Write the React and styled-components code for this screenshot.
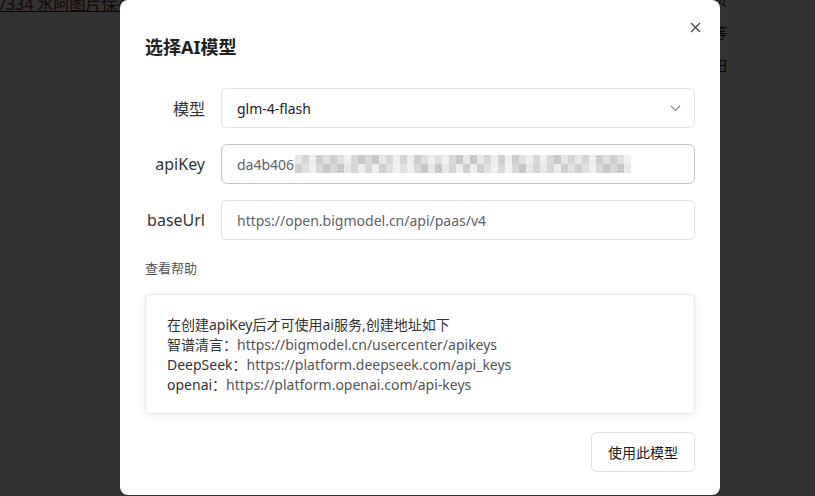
import React from 'react';
import styled, { createGlobalStyle } from 'styled-components';

const GlobalStyle = createGlobalStyle`
  html, body {
    margin: 0;
    padding: 0;
    background: #f2f2f2;
    font-family: "Noto Sans", "Noto Sans CJK SC", sans-serif;
    overflow: hidden;
  }
`;

const Page = styled.div`
  position: relative;
  width: 815px;
  height: 496px;
`;

const PageLink = styled.a`
  display: block;
  margin-top: -9px;
  font-size: 16px;
  color: #7a1010;
  text-decoration: underline;
  white-space: nowrap;
`;

const SideTable = styled.div`
  position: absolute;
  top: -8px;
  left: 640px;
  width: 92px;
  display: flex;
  flex-direction: column;
  background: #fff;
  border-right: 1px solid #fff;
`;

const SideCell = styled.div`
  height: 32px;
  border-bottom: 1px solid #f6f6f6;
  display: flex;
  align-items: center;
  justify-content: flex-end;
  padding-right: 5px;
  font-size: 14px;
  color: #222;
`;

const Overlay = styled.div`
  position: fixed;
  inset: 0;
  background: rgba(0, 0, 0, 0.8);
`;

const Modal = styled.div`
  position: fixed;
  top: 0;
  left: 120px;
  width: 600px;
  height: 495px;
  box-sizing: border-box;
  background: #fff;
  border-radius: 8px;
  padding: 36px 25px 24px;
  display: flex;
  flex-direction: column;
`;

const CloseBtn = styled.button`
  position: absolute;
  top: 20px;
  right: 18px;
  width: 14px;
  height: 14px;
  padding: 0;
  border: none;
  background: none;
  display: flex;
  align-items: center;
  justify-content: center;
`;

const Title = styled.h2`
  margin: 0 0 30px;
  font-size: 18px;
  line-height: 22px;
  font-weight: 700;
  color: #1f1f1f;
`;

const Form = styled.div`
  display: flex;
  flex-direction: column;
  gap: 16px;
`;

const Row = styled.div`
  display: flex;
  align-items: center;
  gap: 16px;
`;

const Label = styled.label`
  width: 60px;
  text-align: right;
  font-size: 16px;
  color: #333;
`;

const Field = styled.div`
  flex: 1;
  height: 40px;
  box-sizing: border-box;
  border: 1px solid ${(p) => p.$border};
  border-radius: 6px;
  padding: 0 15px;
  display: flex;
  align-items: center;
  font-size: 14px;
  color: ${(p) => p.$color || '#606266'};
`;

const Chevron = styled.svg`
  margin-left: auto;
  margin-right: -2px;
`;

const HelpLink = styled.div`
  margin-top: 19px;
  font-size: 13px;
  color: #555;
  line-height: 18px;
`;

const HelpBox = styled.div`
  margin-top: 17px;
  height: 120px;
  box-sizing: border-box;
  border: 1px solid #e6e6e6;
  border-radius: 5px;
  box-shadow: 0 2px 10px rgba(0, 0, 0, 0.07);
  padding: 20px 21px;
  font-size: 14px;
  line-height: 20px;
  color: #333;
`;

const Url = styled.span`
  color: #555;
`;

const Footer = styled.div`
  margin-top: 18px;
  display: flex;
  justify-content: flex-end;
`;

const Button = styled.button`
  width: 104px;
  height: 40px;
  border: 1px solid #e0e0e0;
  border-radius: 6px;
  background: #fff;
  font-family: "Noto Sans CJK SC", sans-serif;
  font-size: 14px;
  color: #1a1a1a;
`;

const shades = [
  '#e8e8e8', '#d6d6d6', '#eeeeee', '#cfcfcf', '#e1e1e1', '#f0f0f0', '#d9d9d9', '#c8c8c8',
];

const Mosaic = () => {
  const cols = 48;
  const rects = [];
  for (let r = 0; r < 2; r += 1) {
    for (let c = 0; c < cols; c += 1) {
      const i = (c * 7 + r * 3 + (c % 5) * 2) % shades.length;
      rects.push(
        <rect key={`${r}-${c}`} x={c * 7} y={r * 9} width="7" height="9" fill={shades[i]} />,
      );
    }
  }
  return (
    <svg width="336" height="18" viewBox="0 0 336 18" style={{ marginLeft: 1 }}>
      {rects}
    </svg>
  );
};

const App = () => (
  <Page>
    <GlobalStyle />
    <PageLink>/334 水阿图片保存</PageLink>
    <SideTable>
      <SideCell>页</SideCell>
      <SideCell>等</SideCell>
      <SideCell>田</SideCell>
    </SideTable>
    <Overlay />
    <Modal>
      <CloseBtn aria-label="close">
        <svg width="11" height="11" viewBox="0 0 11 11">
          <path d="M1 1L10 10M10 1L1 10" stroke="#444" strokeWidth="1.3" />
        </svg>
      </CloseBtn>
      <Title>选择AI模型</Title>
      <Form>
        <Row>
          <Label>模型</Label>
          <Field $border="#e4e4e4" $color="#222">
            glm-4-flash
            <Chevron width="11" height="7" viewBox="0 0 11 7">
              <path d="M1 1L5.5 5.5L10 1" stroke="#888" strokeWidth="1.1" fill="none" />
            </Chevron>
          </Field>
        </Row>
        <Row>
          <Label>apiKey</Label>
          <Field $border="#c4c7cc">
            da4b406
            <Mosaic />
          </Field>
        </Row>
        <Row>
          <Label>baseUrl</Label>
          <Field $border="#e0e0e0">https://open.bigmodel.cn/api/paas/v4</Field>
        </Row>
      </Form>
      <HelpLink>查看帮助</HelpLink>
      <HelpBox>
        <div>在创建apiKey后才可使用ai服务,创建地址如下</div>
        <div>智谱清言：<Url>https://bigmodel.cn/usercenter/apikeys</Url></div>
        <div>DeepSeek：<Url>https://platform.deepseek.com/api_keys</Url></div>
        <div>openai：<Url>https://platform.openai.com/api-keys</Url></div>
      </HelpBox>
      <Footer>
        <Button>使用此模型</Button>
      </Footer>
    </Modal>
  </Page>
);

export default App;
